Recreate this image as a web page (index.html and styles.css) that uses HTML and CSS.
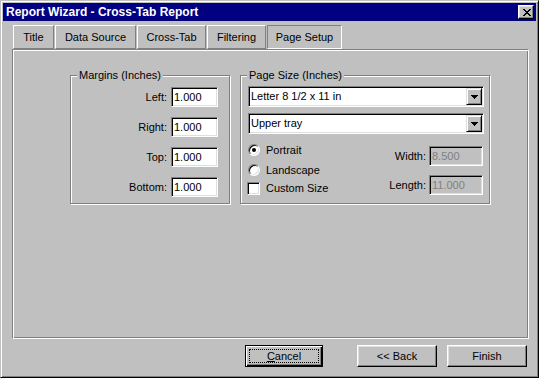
FILE: index.html
```html
<!DOCTYPE html>
<html lang="en">
<head>
    <meta charset="UTF-8">
    <title>Report Wizard - Cross-Tab Report</title>
    <link rel="stylesheet" href="styles.css">
</head>
<body>
    <div class="window">
        <div class="titlebar">
            <span class="title">Report Wizard - Cross-Tab Report</span>
            <div class="close">
                <svg width="8" height="7" viewBox="0 0 8 7" shape-rendering="crispEdges">
                    <path d="M0 0h2v1h1v1h2v-1h1v-1h2v1h-1v1h-1v1h-1v1h1v1h1v1h1v1h-2v-1h-1v-1h-2v1h-1v1h-2v-1h1v-1h1v-1h1v-1h-1v-1h-1v-1h-1z" fill="#000"/>
                </svg>
            </div>
        </div>

        <div class="tabs">
            <div class="tab tab-title">Title</div>
            <div class="tab tab-source">Data Source</div>
            <div class="tab tab-cross">Cross-Tab</div>
            <div class="tab tab-filter">Filtering</div>
            <div class="tab tab-page active">Page Setup</div>
        </div>

        <div class="panel">
            <div class="group margins">
                <span class="group-title">Margins (Inches)</span>
                <div class="field"><label>Left:</label><div class="input">1.000</div></div>
                <div class="field"><label>Right:</label><div class="input">1.000</div></div>
                <div class="field"><label>Top:</label><div class="input">1.000</div></div>
                <div class="field"><label>Bottom:</label><div class="input">1.000</div></div>
            </div>

            <div class="group pagesize">
                <span class="group-title">Page Size (Inches)</span>
                <div class="select">
                    <span class="select-text">Letter 8 1/2 x 11 in</span>
                    <span class="arrow"><svg width="7" height="4" viewBox="0 0 7 4" shape-rendering="crispEdges"><path d="M0 0h7v1h-1v1h-1v1h-1v1h-1v-1h-1v-1h-1v-1h-1z" fill="#000"/></svg></span>
                </div>
                <div class="select">
                    <span class="select-text">Upper tray</span>
                    <span class="arrow"><svg width="7" height="4" viewBox="0 0 7 4" shape-rendering="crispEdges"><path d="M0 0h7v1h-1v1h-1v1h-1v1h-1v-1h-1v-1h-1v-1h-1z" fill="#000"/></svg></span>
                </div>

                <div class="options-row">
                    <div class="options">
                        <div class="option"><span class="radio checked"></span>Portrait</div>
                        <div class="option"><span class="radio"></span>Landscape</div>
                        <div class="option check-row"><span class="checkbox"></span>Custom Size</div>
                    </div>
                    <div class="sizes">
                        <div class="field"><label>Width:</label><div class="input disabled wide">8.500</div></div>
                        <div class="field"><label>Length:</label><div class="input disabled wide">11.000</div></div>
                    </div>
                </div>
            </div>
        </div>

        <div class="buttons">
            <div class="btn default"><span class="focus"><u>C</u>ancel</span></div>
            <div class="btn back">&lt;&lt; Back</div>
            <div class="btn">Finish</div>
        </div>
    </div>
</body>
</html>
```

FILE: styles.css
```css
body {
    margin: 0;
    background: #c0c0c0;
    font-family: 'Liberation Sans', Arial, sans-serif;
    font-size: 11px;
    color: #000;
}
.window {
    width: 539px;
    height: 378px;
    box-sizing: border-box;
    padding: 2px;
    background: #c0c0c0;
    border: 1px solid;
    border-color: #c0c0c0 #000 #000 #c0c0c0;
    box-shadow: inset 1px 1px 0 #fff, inset -1px -1px 0 #808080;
}
.titlebar {
    height: 18px;
    background: #000080;
    display: flex;
    align-items: center;
    justify-content: space-between;
    padding: 0 2px 0 3px;
}
.title {
    color: #fff;
    font-weight: bold;
    font-size: 12px;
}
.close {
    width: 16px;
    height: 14px;
    box-sizing: border-box;
    background: #c0c0c0;
    border: 1px solid;
    border-color: #fff #000 #000 #fff;
    box-shadow: inset -1px -1px 0 #808080, inset 1px 1px 0 #dfdfdf;
    display: flex;
    align-items: center;
    justify-content: center;
    padding-left: 1px;
}
.tabs {
    display: flex;
    gap: 1px;
    margin-top: 4px;
    padding-left: 10px;
    height: 24px;
}
.tab {
    box-sizing: border-box;
    height: 24px;
    border: 1px solid;
    border-color: #fff #808080 #808080 #fff;
    display: flex;
    align-items: center;
    justify-content: center;
}
.tab-title { width: 41px; }
.tab-source { width: 81px; }
.tab-cross { width: 69px; }
.tab-filter { width: 59px; }
.tab-page { width: 75px; }
.tab.active {
    border-color: #808080 #fff #fff #808080;
}
.panel {
    margin-left: 9px;
    width: 517px;
    height: 290px;
    box-sizing: border-box;
    border: 1px solid;
    border-color: #808080 #fff #fff #808080;
    box-shadow: inset 1px 1px 0 #fff, inset -1px -1px 0 #808080;
    display: flex;
    align-items: flex-start;
    gap: 10px;
    padding: 25px 0 0 57px;
}
.group {
    position: relative;
    box-sizing: border-box;
    height: 129px;
    border: 1px solid #808080;
    box-shadow: 1px 1px 0 #fff, inset 1px 1px 0 #fff;
}
.group-title {
    position: absolute;
    top: -7px;
    left: 6px;
    padding: 0 2px;
    line-height: 13px;
    background: #c0c0c0;
}
.margins {
    width: 160px;
    display: flex;
    flex-direction: column;
    align-items: flex-end;
    gap: 10px;
    padding: 11px 11px 0 0;
}
.field {
    display: flex;
    align-items: center;
    gap: 4px;
}
.input {
    width: 47px;
    height: 20px;
    box-sizing: border-box;
    background: #fff;
    border: 1px solid;
    border-color: #808080 #fff #fff #808080;
    box-shadow: inset 1px 1px 0 #000, inset -1px -1px 0 #dfdfdf;
    padding-left: 2px;
    line-height: 18px;
}
.input.wide {
    width: 54px;
}
.input.disabled {
    background: #c0c0c0;
    color: #808080;
}
.pagesize {
    width: 250px;
    padding: 10px 5px 0 7px;
}
.select {
    height: 21px;
    box-sizing: border-box;
    background: #fff;
    border: 1px solid;
    border-color: #808080 #fff #fff #808080;
    box-shadow: inset 1px 1px 0 #000, inset -1px -1px 0 #dfdfdf;
    padding: 1px;
    display: flex;
    margin-bottom: 6px;
}
.select-text {
    flex: 1;
    padding-left: 1px;
    line-height: 17px;
}
.arrow {
    width: 16px;
    height: 17px;
    box-sizing: border-box;
    background: #c0c0c0;
    border: 1px solid;
    border-color: #dfdfdf #000 #000 #dfdfdf;
    box-shadow: inset 1px 1px 0 #fff, inset -1px -1px 0 #808080;
    display: flex;
    align-items: center;
    justify-content: center;
}
.options-row {
    display: flex;
    justify-content: space-between;
    margin-top: 2px;
}
.options {
    display: flex;
    flex-direction: column;
}
.option {
    height: 20px;
    display: flex;
    align-items: center;
    gap: 6px;
}
.option.check-row {
    height: 16px;
    gap: 6px;
    margin-left: -1px;
}
.radio {
    width: 12px;
    height: 12px;
    box-sizing: border-box;
    border-radius: 50%;
    background: #fff;
    border: 1px solid;
    border-color: #808080 #fff #fff #808080;
    box-shadow: inset 1px 1px 0 #000, inset -1px -1px 0 #dfdfdf;
    display: flex;
    align-items: center;
    justify-content: center;
}
.radio.checked::after {
    content: "";
    width: 4px;
    height: 4px;
    border-radius: 50%;
    background: #000;
}
.checkbox {
    width: 13px;
    height: 13px;
    box-sizing: border-box;
    background: #fff;
    border: 1px solid;
    border-color: #808080 #fff #fff #808080;
    box-shadow: inset 1px 1px 0 #000, inset -1px -1px 0 #dfdfdf;
}
.sizes {
    display: flex;
    flex-direction: column;
    align-items: flex-end;
    gap: 9px;
    padding-top: 6px;
    margin-right: 1px;
}
.sizes .field {
    gap: 3px;
}
.buttons {
    display: flex;
    justify-content: flex-end;
    margin-top: 6px;
    padding-right: 9px;
}
.btn {
    width: 80px;
    height: 22px;
    box-sizing: border-box;
    border: 1px solid;
    border-color: #fff #000 #000 #fff;
    box-shadow: inset -1px -1px 0 #808080, inset 1px 1px 0 #dfdfdf;
    display: flex;
    align-items: center;
    justify-content: center;
}
.btn.back {
    margin-right: 10px;
}
.btn.default {
    width: 78px;
    margin-right: 34px;
    border-color: #000;
    box-shadow: inset 1px 1px 0 #fff, inset -1px -1px 0 #000, inset -2px -2px 0 #808080;
    padding: 3px;
}
.focus {
    flex: 1;
    align-self: stretch;
    border: 1px dotted #000;
    display: flex;
    align-items: center;
    justify-content: center;
}
```
